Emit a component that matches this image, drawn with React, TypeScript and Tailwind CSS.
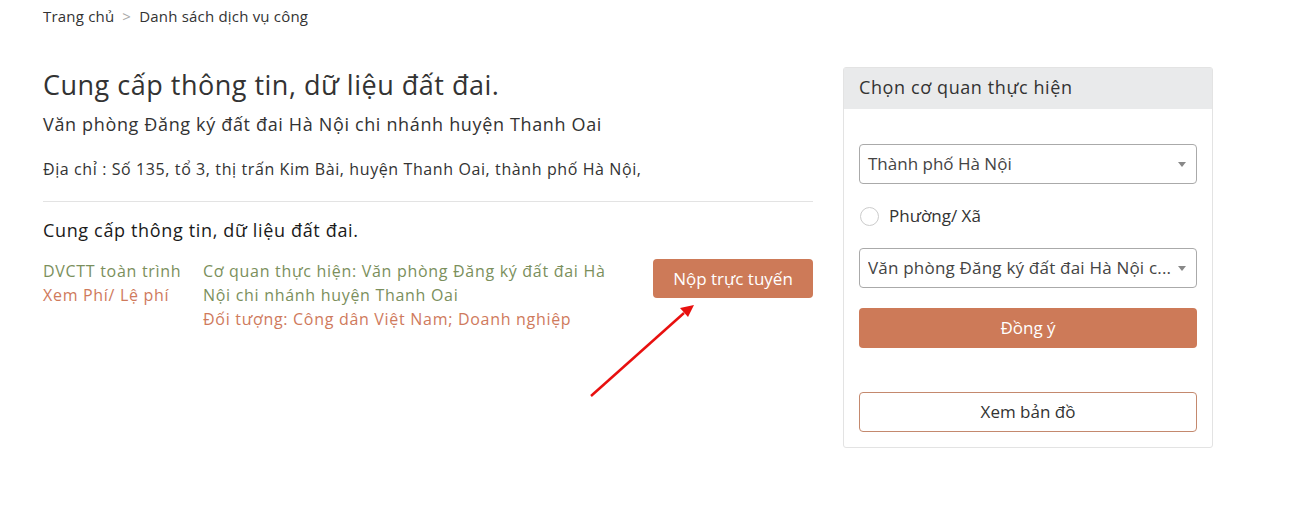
import React from "react";

function Caret() {
  return (
    <svg width="8" height="5" viewBox="0 0 8 5" className="shrink-0">
      <path d="M0 0 L8 0 L4 5 Z" fill="#888" />
    </svg>
  );
}

export default function App() {
  return (
    <div className="relative w-[1301px] h-[528px] bg-white text-[#333] overflow-hidden" style={{ fontFamily: "'Open Sans', 'Noto Sans', sans-serif" }}>
      <div className="pl-[43px] pt-[5px]">
        <div className="flex items-center h-[22px] text-[15px] text-[#333] tracking-[0.2px]">
          <span>Trang chủ</span>
          <span className="mx-[8px] text-[#aaa]">&gt;</span>
          <span>Danh sách dịch vụ công</span>
        </div>
        <div className="flex mt-[40px]">
          <div className="w-[770px]">
            <h1 className="text-[27px] leading-[34px] text-[#333] mt-[1px] tracking-[0.5px]">Cung cấp thông tin, dữ liệu đất đai.</h1>
            <div className="text-[18px] leading-[26px] mt-[9px] tracking-[0.65px]">Văn phòng Đăng ký đất đai Hà Nội chi nhánh huyện Thanh Oai</div>
            <div className="text-[16px] leading-[24px] mt-[20px] tracking-[0.6px]">Địa chỉ : Số 135, tổ 3, thị trấn Kim Bài, huyện Thanh Oai, thành phố Hà Nội,</div>
            <div className="border-t border-[#e3e3e3] mt-[20px]" />
            <div className="text-[18px] leading-[26px] mt-[15px] text-[#1a1a1a] font-medium tracking-[0.65px]">Cung cấp thông tin, dữ liệu đất đai.</div>
            <div className="flex mt-[16px] text-[16px] leading-[24px] tracking-[0.7px]">
              <div className="w-[160px]">
                <div className="text-[#7b8f5c]">DVCTT toàn trình</div>
                <div className="text-[#cf7a5c]">Xem Phí/ Lệ phí</div>
              </div>
              <div className="w-[420px]">
                <div className="text-[#7b8f5c]">Cơ quan thực hiện: Văn phòng Đăng ký đất đai Hà Nội chi nhánh huyện Thanh Oai</div>
                <div className="text-[#cf7a5c]">Đối tượng: Công dân Việt Nam; Doanh nghiệp</div>
              </div>
              <div className="ml-auto">
                <button className="w-[160px] h-[39px] bg-[#cd7a58] text-white text-[17px] rounded-[4px] tracking-normal">Nộp trực tuyến</button>
              </div>
            </div>
          </div>
          <div className="ml-[30px] w-[370px] border border-[#e3e3e3] rounded-[3px]">
            <div className="h-[41px] bg-[#e9eaeb] px-[15px] flex items-center text-[18px] text-[#333] tracking-[0.6px] pb-[2px]">Chọn cơ quan thực hiện</div>
            <div className="px-[15px] pt-[35px] pb-[15px]">
              <div className="h-[40px] border border-[#aaa] rounded-[4px] flex items-center pl-[8px] pr-[10px] text-[17px] text-[#444]">
                <span className="flex-1">Thành phố Hà Nội</span>
                <Caret />
              </div>
              <div className="flex items-center h-[24px] mt-[20px]">
                <span className="w-[19px] h-[19px] rounded-full border border-[#ccc] ml-[1px]" />
                <span className="ml-[10px] text-[17px] text-[#333]">Phường/ Xã</span>
              </div>
              <div className="h-[40px] mt-[20px] border border-[#aaa] rounded-[4px] flex items-center pl-[8px] pr-[10px] text-[17px] text-[#444] tracking-[0.2px]">
                <span className="flex-1 truncate">Văn phòng Đăng ký đất đai Hà Nội c...</span>
                <Caret />
              </div>
              <button className="w-full h-[40px] mt-[20px] bg-[#cd7a58] text-white text-[17px] rounded-[4px]">Đồng ý</button>
              <button className="w-full h-[40px] mt-[44px] border border-[#c4896e] bg-white text-[#333] text-[17px] rounded-[4px]">Xem bản đồ</button>
            </div>
          </div>
        </div>
      </div>
      <svg className="absolute left-0 top-0 pointer-events-none" width="1301" height="528">
        <line x1="591" y1="396" x2="684" y2="313" stroke="#e8100f" strokeWidth="2.5" />
        <path d="M694 305 L680 308 L688 317 Z" fill="#e8100f" />
      </svg>
    </div>
  );
}
